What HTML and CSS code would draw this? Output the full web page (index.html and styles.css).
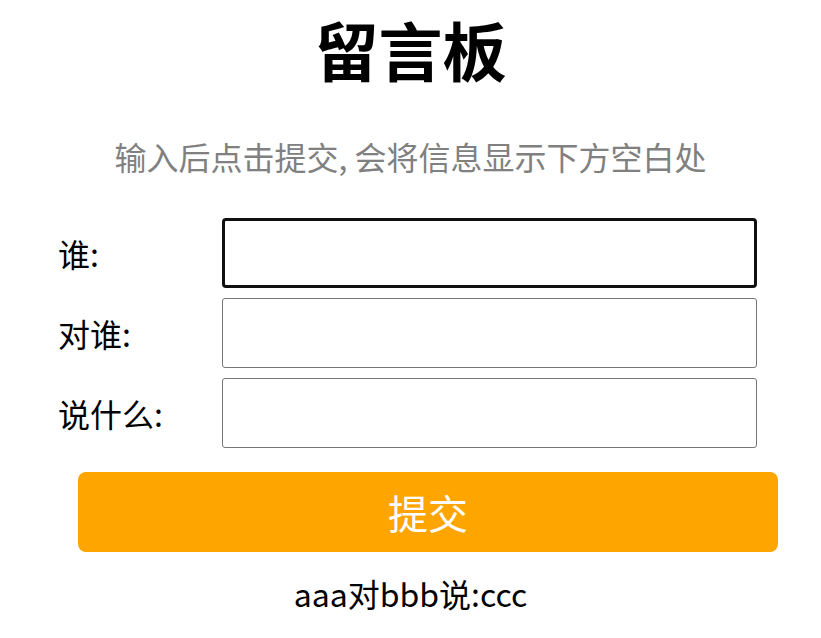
FILE: index.html
```html
<!DOCTYPE html>
<html>
<head>
    <meta charset="UTF-8">
    <title>留言板</title>
    <link rel="stylesheet" href="styles.css">
</head>
<body>
    <h1 class="board-title">留言板</h1>
    <p class="board-hint">输入后点击提交, 会将信息显示下方空白处</p>

    <form class="board-form" id="boardForm">
        <div class="form-row">
            <label for="who">谁:</label>
            <input type="text" id="who" autofocus>
        </div>
        <div class="form-row">
            <label for="toWhom">对谁:</label>
            <input type="text" id="toWhom">
        </div>
        <div class="form-row">
            <label for="what">说什么:</label>
            <input type="text" id="what">
        </div>
        <button type="submit" class="submit-button">提交</button>
    </form>

    <div class="messages" id="messages">
        <p class="message">aaa对bbb说:ccc</p>
    </div>

    <script>
        document.getElementById('boardForm').addEventListener('submit', function (e) {
            e.preventDefault();
            const who = document.getElementById('who').value;
            const toWhom = document.getElementById('toWhom').value;
            const what = document.getElementById('what').value;
            if (!who || !toWhom || !what) return;

            const line = document.createElement('p');
            line.className = 'message';
            line.textContent = `${who}对${toWhom}说:${what}`;
            document.getElementById('messages').appendChild(line);
            this.reset();
        });
    </script>
</body>
</html>
```

FILE: styles.css
```css
body {
    margin: 8px;
    font-family: "Noto Sans CJK SC", "Noto Sans", sans-serif;
    color: #000;
    background: #fff;
}
.board-title {
    margin: 0;
    font-size: 64px;
    line-height: 80px;
    font-weight: bold;
    text-align: center;
}
.board-hint {
    margin: 45px 0 39px;
    font-size: 32px;
    line-height: 46px;
    color: #808080;
    text-align: center;
}
.board-form {
    width: 720px;
    margin-left: 50px;
}
.form-row {
    display: grid;
    grid-template-columns: 164px 535px;
    align-items: center;
    margin-bottom: 10px;
}
.form-row label {
    font-size: 32px;
}
.form-row input {
    box-sizing: border-box;
    height: 70px;
    padding: 0 6px;
    border: 1px solid #767676;
    border-radius: 3px;
    font-size: 24px;
    caret-color: #000;
}
.form-row input:focus {
    outline: none;
    border: 3px solid #101010;
    border-radius: 4px;
    padding: 0 4px;
}
.submit-button {
    display: block;
    width: 700px;
    height: 80px;
    margin: 24px 0 0 20px;
    border: none;
    border-radius: 8px;
    background: #ffa500;
    color: #fff;
    font-family: inherit;
    font-size: 40px;
    cursor: pointer;
}
.messages {
    margin-top: 18px;
}
.message {
    margin: 0;
    font-size: 32px;
    line-height: 46px;
    text-align: center;
}
```
